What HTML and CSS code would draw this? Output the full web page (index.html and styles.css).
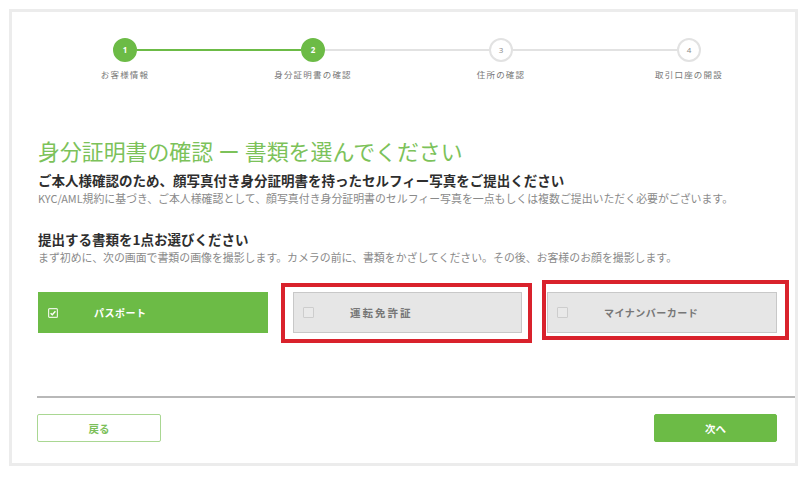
FILE: index.html
```html
<!DOCTYPE html>
<html lang="ja">
<head>
<meta charset="utf-8">
<title>身分証明書の確認</title>
<link rel="stylesheet" href="styles.css">
</head>
<body>
<div class="panel">
  <div class="stepper">
    <div class="circle done">1</div>
    <div class="line done"></div>
    <div class="circle done">2</div>
    <div class="line"></div>
    <div class="circle">3</div>
    <div class="line"></div>
    <div class="circle">4</div>
    <div class="label c1">お客様情報</div>
    <div class="label c3">身分証明書の確認</div>
    <div class="label c5">住所の確認</div>
    <div class="label c7">取引口座の開設</div>
  </div>

  <h1 class="title">身分証明書の確認 ー 書類を選んでください</h1>
  <h2 class="heading">ご本人様確認のため、顔写真付き身分証明書を持ったセルフィー写真をご提出ください</h2>
  <p class="note">KYC/AML規約に基づき、ご本人様確認として、顔写真付き身分証明書のセルフィー写真を一点もしくは複数ご提出いただく必要がございます。</p>

  <h2 class="heading second">提出する書類を1点お選びください</h2>
  <p class="note">まず初めに、次の画面で書類の画像を撮影します。カメラの前に、書類をかざしてください。その後、お客様のお顔を撮影します。</p>

  <div class="cards">
    <div class="card selected">
      <span class="check">
        <svg viewBox="0 0 10 10" width="10" height="10"><rect x="0.6" y="0.6" width="8.8" height="8.8" rx="1" fill="none" stroke="#e8f4e0" stroke-width="1.2"/><path d="M2.6 5.2 L4.3 6.8 L7.4 3.2" fill="none" stroke="#ffffff" stroke-width="1.4"/></svg>
      </span>
      <span class="card-text">パスポート</span>
    </div>
    <div class="card">
      <span class="check box"></span>
      <span class="card-text wide">運転免許証</span>
      <span class="mark mark-a"></span>
    </div>
    <div class="card">
      <span class="check box"></span>
      <span class="card-text">マイナンバーカード</span>
      <span class="mark mark-b"></span>
    </div>
  </div>

  <div class="separator"></div>

  <div class="footer">
    <button class="btn back">戻る</button>
    <button class="btn next">次へ</button>
  </div>
</div>
</body>
</html>
```

FILE: styles.css
```css
html, body {
  margin: 0;
  padding: 0;
  background: #ffffff;
}

body {
  font-family: "Noto Sans CJK JP", "Noto Sans", sans-serif;
  color: #333;
}

.panel {
  margin: 9px 2px 0 9px;
  border: 3px solid #ececec;
  padding: 26px 18px 21px 26px;
  background: #ffffff;
}

.stepper {
  display: grid;
  grid-template-columns: 24px 1fr 24px 1fr 24px 1fr 24px;
  grid-template-rows: 24px auto;
  row-gap: 6px;
  margin: 0 76px 0 75px;
}

.circle {
  width: 20px;
  height: 20px;
  border: 2px solid #e2e2e2;
  border-radius: 50%;
  background: #fff;
  color: #888;
  font-family: "Open Sans", "Noto Sans", sans-serif;
  font-size: 8px;
  line-height: 20px;
  text-align: center;
  grid-row: 1;
}

.circle.done {
  background: #6cbb46;
  border-color: #6cbb46;
  color: #fff;
  font-weight: 700;
}

.line {
  grid-row: 1;
  align-self: center;
  height: 2px;
  background: #e2e2e2;
}

.line.done {
  background: #6cbb46;
}

.label {
  grid-row: 2;
  justify-self: center;
  white-space: nowrap;
  font-size: 8.5px;
  line-height: 12px;
  color: #777;
  letter-spacing: 1.2px;
}

.c1 { grid-column: 1; }
.c3 { grid-column: 3; }
.c5 { grid-column: 5; }
.c7 { grid-column: 7; }

.title {
  margin: 56px 0 0 0;
  font-size: 21.9px;
  line-height: 30px;
  font-weight: 400;
  color: #7cc25a;
  white-space: nowrap;
}

.heading {
  margin: 4px 0 0 0;
  font-size: 13.5px;
  line-height: 20px;
  font-weight: 700;
  color: #2e2e2e;
  white-space: nowrap;
}

.heading.second {
  margin-top: 23px;
}

.note {
  margin: 0;
  font-size: 10.9px;
  line-height: 16px;
  color: #8a8a8a;
  white-space: nowrap;
}

.cards {
  display: grid;
  grid-template-columns: 230px 229px 230px;
  column-gap: 25px;
  margin-top: 27px;
}

.card {
  position: relative;
  height: 41px;
  box-sizing: border-box;
  display: flex;
  align-items: center;
  padding-left: 9px;
  background: #e6e6e6;
  border: 1px solid #c8c8c8;
}

.card.selected {
  background: #6cbb46;
  border-color: #6cbb46;
}

.check {
  width: 10px;
  height: 10px;
  display: flex;
}

.check.box {
  width: 9px;
  height: 9px;
  border: 1px solid #cdcdcd;
  border-radius: 1px;
  background: #e9e9e9;
}

.card-text {
  margin-left: 36px;
  font-size: 10px;
  font-weight: 700;
  color: #777;
  letter-spacing: 0.5px;
}

.card-text.wide {
  font-size: 10.5px;
  letter-spacing: 2px;
}

.selected .card-text {
  color: #ffffff;
}

.mark {
  position: absolute;
  border: 4px solid #d9222c;
  pointer-events: none;
}

.mark-a {
  left: -13px;
  right: -11px;
  top: -10px;
  bottom: -11px;
}

.mark-b {
  left: -6px;
  right: -13px;
  top: -13px;
  bottom: -8px;
}

.separator {
  margin: 63px -18px 0 -1px;
  height: 2px;
  background: #b8b8b8;
  box-shadow: 0 -6px 10px rgba(0, 0, 0, 0.025);
}

.footer {
  display: flex;
  justify-content: space-between;
  margin-top: 16px;
}

.btn {
  height: 28px;
  box-sizing: border-box;
  font-family: "Noto Sans CJK JP", sans-serif;
  font-size: 10.5px;
  font-weight: 700;
  border-radius: 2px;
  padding: 0;
}

.back {
  width: 124px;
  margin-left: -1px;
  background: #fff;
  border: 1px solid #a9d792;
  color: #7cbf5a;
}

.next {
  width: 123px;
  background: #6cbb46;
  border: 1px solid #6cbb46;
  color: #fff;
}
```
